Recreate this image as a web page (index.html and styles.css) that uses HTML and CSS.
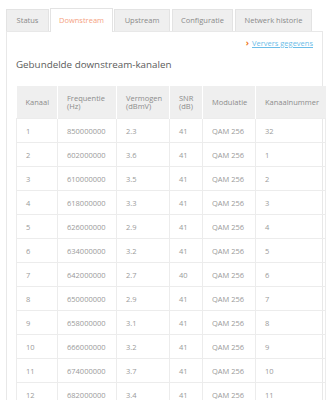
FILE: index.html
```html
<!DOCTYPE html>
<html>
<head>
<meta charset="utf-8">
<link rel="stylesheet" href="styles.css">
</head>
<body>
<div class="wrap">
  <div class="tabs">
    <div class="tab t-status">Status</div>
    <div class="tab t-down active">Downstream</div>
    <div class="tab t-up">Upstream</div>
    <div class="tab t-conf">Configuratie</div>
    <div class="tab t-hist">Netwerk historie</div>
  </div>
  <div class="panel">
    <div class="refresh"><span class="chev">›</span><a href="#">Ververs gegevens</a></div>
    <h2 class="title">Gebundelde downstream-kanalen</h2>
    <table class="grid">
      <colgroup>
        <col class="c1"><col class="c2"><col class="c3"><col class="c4"><col class="c5"><col class="c6">
      </colgroup>
      <thead>
        <tr><th>Kanaal</th><th>Frequentie<br>(Hz)</th><th>Vermogen<br>(dBmV)</th><th>SNR<br>(dB)</th><th>Modulatie</th><th>Kanaalnummer</th></tr>
      </thead>
      <tbody>
        <tr><td>1</td><td>850000000</td><td>2.3</td><td>41</td><td>QAM 256</td><td>32</td></tr>
        <tr><td>2</td><td>602000000</td><td>3.6</td><td>41</td><td>QAM 256</td><td>1</td></tr>
        <tr><td>3</td><td>610000000</td><td>3.5</td><td>41</td><td>QAM 256</td><td>2</td></tr>
        <tr><td>4</td><td>618000000</td><td>3.3</td><td>41</td><td>QAM 256</td><td>3</td></tr>
        <tr><td>5</td><td>626000000</td><td>2.9</td><td>41</td><td>QAM 256</td><td>4</td></tr>
        <tr><td>6</td><td>634000000</td><td>3.2</td><td>41</td><td>QAM 256</td><td>5</td></tr>
        <tr><td>7</td><td>642000000</td><td>2.7</td><td>40</td><td>QAM 256</td><td>6</td></tr>
        <tr><td>8</td><td>650000000</td><td>2.9</td><td>41</td><td>QAM 256</td><td>7</td></tr>
        <tr><td>9</td><td>658000000</td><td>3.1</td><td>41</td><td>QAM 256</td><td>8</td></tr>
        <tr><td>10</td><td>666000000</td><td>3.2</td><td>41</td><td>QAM 256</td><td>9</td></tr>
        <tr><td>11</td><td>674000000</td><td>3.7</td><td>41</td><td>QAM 256</td><td>10</td></tr>
        <tr><td>12</td><td>682000000</td><td>3.4</td><td>41</td><td>QAM 256</td><td>11</td></tr>
      </tbody>
    </table>
  </div>
</div>
</body>
</html>
```
FILE: styles.css
```css
html, body {
  margin: 0;
  padding: 0;
  background: #fff;
}
body {
  font-family: "Open Sans", "Noto Sans", sans-serif;
  color: #999;
  overflow: hidden;
}
.wrap {
  padding: 8px 0 0 6px;
  width: 317px;
}
.tabs {
  display: flex;
  align-items: flex-end;
  gap: 1px;
  position: relative;
  z-index: 1;
}
.tab {
  box-sizing: border-box;
  height: 22px;
  line-height: 21px;
  text-align: center;
  white-space: nowrap;
  background: #efefef;
  border: 1px solid #e3e3e3;
  border-bottom: none;
  font-size: 7.5px;
  color: #8a8a8a;
}
.t-status { width: 43px; }
.t-down { width: 63px; }
.t-up { width: 56px; }
.t-conf { width: 61px; margin-left: 1px; }
.t-hist { width: 77px; margin-left: 1px; }
.tab.active {
  background: #fff;
  color: #f5a27f;
  height: 24px;
  line-height: 23px;
  margin-bottom: -1px;
}
.panel {
  border: 1px solid #e8e8e8;
  border-bottom: none;
  padding: 5px 0 0 0;
  height: 400px;
}
.refresh {
  text-align: right;
  padding-right: 9px;
  font-size: 7.5px;
  line-height: 12px;
}
.chev {
  color: #f07c1c;
  font-weight: bold;
  font-size: 9px;
  margin-right: 3px;
}
.refresh a {
  color: #6cbde8;
  text-decoration: underline;
}
.title {
  margin: 8px 0 0 9px;
  font-size: 9.8px;
  font-weight: normal;
  color: #5a5a5a;
  line-height: 16px;
}
.grid {
  margin: 13px 0 0 9px;
  width: 309px;
  table-layout: fixed;
  border-collapse: collapse;
  font-size: 7.5px;
}
.c1 { width: 41px; }
.c2 { width: 59px; }
.c3 { width: 53px; }
.c4 { width: 33px; }
.c5 { width: 53px; }
.c6 { width: 70px; }
.grid th {
  background: #efefef;
  font-weight: normal;
  color: #8c8c8c;
  text-align: left;
  padding: 0 0 0 9px;
  height: 32px;
  line-height: 8.5px;
  border-right: 1px solid #fff;
  vertical-align: middle;
}
.grid th:last-child { border-right: none; }
.grid td {
  height: 23px;
  padding: 0 0 0 9px;
  border: 1px solid #ececec;
  color: #9a9a9a;
  white-space: nowrap;
}
```
